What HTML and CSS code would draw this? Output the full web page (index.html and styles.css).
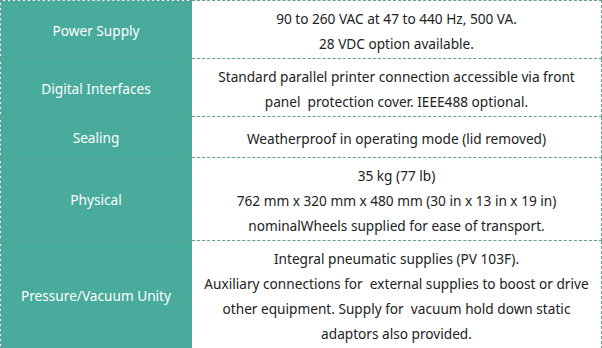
FILE: index.html
```html
<!DOCTYPE html>
<html>
<head>
<meta charset="utf-8">
<link rel="stylesheet" href="styles.css">
</head>
<body>
<table class="spec">
  <tr>
    <th class="label">Power Supply</th>
    <td class="value">90 to 260 VAC at 47 to 440 Hz, 500 VA.<br>28 VDC option available.</td>
  </tr>
  <tr>
    <th class="label">Digital Interfaces</th>
    <td class="value">Standard parallel printer connection accessible via front<br>panel&nbsp; protection cover. IEEE488 optional.</td>
  </tr>
  <tr>
    <th class="label">Sealing</th>
    <td class="value">Weatherproof in operating mode (lid removed)</td>
  </tr>
  <tr>
    <th class="label">Physical</th>
    <td class="value">35 kg (77 lb)<br>762 mm x 320 mm x 480 mm (30 in x 13 in x 19 in)<br>nominalWheels supplied for ease of transport.</td>
  </tr>
  <tr>
    <th class="label">Pressure/Vacuum Unity</th>
    <td class="value">Integral pneumatic supplies (PV 103F).<br>Auxiliary connections for&nbsp; external supplies to boost or drive<br>other equipment. Supply for&nbsp; vacuum hold down static<br>adaptors also provided.</td>
  </tr>
</table>
</body>
</html>
```
FILE: styles.css
```css
html, body {
  margin: 0;
  padding: 0;
  background: #ffffff;
}
body {
  font-family: "Noto Sans", "Liberation Sans", sans-serif;
  font-size: 13.65px;
  color: #222222;
}
.spec {
  width: 602px;
  border-collapse: collapse;
  table-layout: fixed;
}
.spec th, .spec td {
  border: 1px dashed #5f9f8f;
  text-align: center;
  vertical-align: middle;
  line-height: 25px;
}
.label {
  width: 190px;
  background: #48ab9b;
  color: #ffffff;
  font-weight: normal;
  padding: 8px 0 7px;
}
.value {
  padding: 5px 0 2px;
}
```
